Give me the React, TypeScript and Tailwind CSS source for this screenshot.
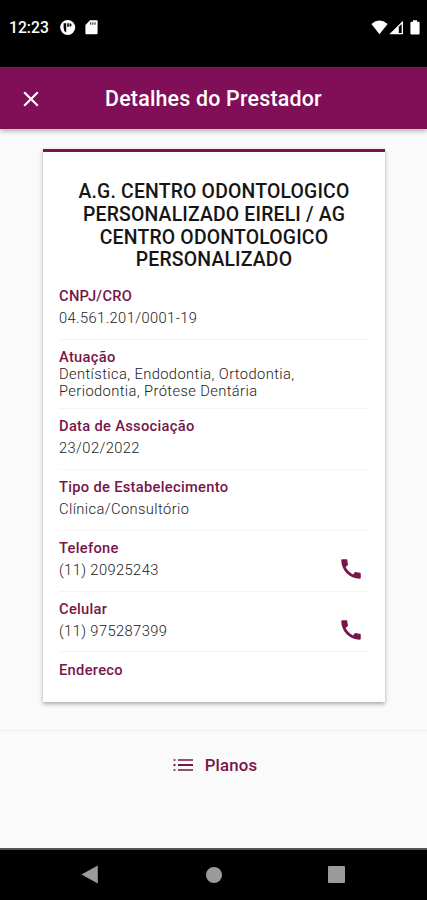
import { MdCall, MdClose } from "react-icons/md";

type Field = {
  label: string;
  value?: string;
  phone?: boolean;
  className: string;
  valueClassName?: string;
};

const fields: Field[] = [
  { label: "CNPJ/CRO", value: "04.561.201/0001-19", className: "h-[61px]" },
  {
    label: "Atuação",
    value: "Dentística, Endodontia, Ortodontia, Periodontia, Prótese Dentária",
    className: "h-[69.5px]",
    valueClassName: "w-[260px]",
  },
  { label: "Data de Associação", value: "23/02/2022", className: "h-[61px]" },
  {
    label: "Tipo de Estabelecimento",
    value: "Clínica/Consultório",
    className: "h-[60.5px]",
  },
  {
    label: "Telefone",
    value: "(11) 20925243",
    phone: true,
    className: "h-[61px]",
  },
  {
    label: "Celular",
    value: "(11) 975287399",
    phone: true,
    className: "h-[60.5px]",
  },
];

const StatusBar = () => (
  <div className="flex h-[67px] shrink-0 items-start justify-between bg-black pt-[18px] pr-[7px] pl-[9px] text-white">
    <div className="flex h-[19px] items-center">
      <span className="w-[51px] text-[15.7px] leading-[19px] font-medium">
        12:23
      </span>
      <svg width="16" height="16" viewBox="0 0 16 16">
        <circle cx="7.7" cy="7.5" r="7.5" fill="#fff" />
        <path
          d="M3.6 3.2h2.6v9.2Q3.6 11 3.6 8zM7.2 3.2h1.6v3.6H7.2zM9.6 3.2q2 0 2 1.8t-2 1.8z"
          fill="#000"
        />
      </svg>
      <svg className="ml-[9px]" width="13" height="16" viewBox="0 0 13 16">
        <path
          d="M5 .3h6.6q1 0 1 1v12q0 1-1 1H1.4q-1 0-1-1V5z"
          fill="#fff"
        />
        <path
          d="M5 2.3h1.3v2.4H5zM7.2 2.3h1.3v2.4H7.2zM9.4 2.3h1.3v2.4H9.4z"
          fill="#555"
        />
      </svg>
    </div>
    <div className="flex h-[19px] items-center">
      <svg width="17" height="15" viewBox="0 0 17 15">
        <path d="M.4 3.9Q8.5-2.9 16.6 3.9L8.5 14.3z" fill="#fff" />
      </svg>
      <svg className="ml-px" width="15" height="15" viewBox="0 0 15 15">
        <path d="M.3 14.3 14 .7v13.6z" fill="#fff" />
        <path d="M9.8 6.8 12.7 4v9H9.8z" fill="#000" />
      </svg>
      <svg className="ml-[6px]" width="10" height="15" viewBox="0 0 10 15">
        <path
          d="M3 .3h4v1.5h1.6q1 0 1 1v10.6q0 1-1 1H1.4q-1 0-1-1V2.8q0-1 1-1H3z"
          fill="#fff"
        />
      </svg>
    </div>
  </div>
);

const ListIcon = () => (
  <svg width="20" height="12" viewBox="0 0 20 12" fill="currentColor">
    <path d="M.5.3h2v1.5h-2zM.5 5h2v2h-2zM.5 10.2h2v1.5h-2z" />
    <path d="M5 .3h15v1.5H5zM5 5h15v2H5zM5 10.2h15v1.5H5z" />
  </svg>
);

const NavigationBar = () => (
  <div className="flex h-[52px] shrink-0 items-center justify-between border-t-2 border-[#555] bg-black pr-[82px] pl-[81px]">
    <svg width="18" height="20" viewBox="0 0 18 20">
      <path d="M.5 9.5 16.8.4v18.2z" fill="#9b9b9b" />
    </svg>
    <div className="size-4 rounded-full bg-[#9b9b9b]" />
    <div className="mb-px size-[17px] rounded-[1px] bg-[#9b9b9b]" />
  </div>
);

const App = () => {
  return (
    <div className="flex h-[900px] w-[427px] flex-col overflow-hidden bg-[#fafafa] font-[Roboto,sans-serif]">
      <StatusBar />

      <header className="z-10 flex h-[62px] shrink-0 items-center bg-[#800f57] pt-px text-white shadow-[0_2px_5px_rgba(0,0,0,0.3)]">
        <MdClose className="ml-[18px] size-[26px]" />
        <h1 className="ml-[61px] text-[21.4px] leading-6 font-medium tracking-[0.2px] whitespace-nowrap">
          Detalhes do Prestador
        </h1>
      </header>

      <main className="flex-1">
        <section className="mt-5 ml-[43px] h-[553px] w-[342px] border-t-3 border-[#76164a] bg-white px-4 shadow-[0_2px_4px_rgba(0,0,0,0.34)]">
          <h2 className="pt-[29px] text-center text-[19.4px] leading-[22.8px] font-medium tracking-[0.18px] text-[#151515]">
            A.G. CENTRO ODONTOLOGICO
            <br />
            PERSONALIZADO EIRELI / AG
            <br />
            CENTRO ODONTOLOGICO
            <br />
            PERSONALIZADO
          </h2>

          <div className="mt-[6.8px]">
            {fields.map((field) => (
              <div
                key={field.label}
                className={`flex justify-between border-b border-[#f4f4f4] pt-[9px] ${field.className}`}
              >
                <div>
                  <p className="text-[14.7px] leading-[17px] font-medium tracking-[0.3px] text-[#76164a]">
                    {field.label}
                  </p>
                  <p
                    className={`text-[14.7px] leading-[17.5px] font-light tracking-[0.4px] text-[#222] ${
                      field.valueClassName ?? "mt-[5px]"
                    }`}
                  >
                    {field.value}
                  </p>
                </div>
                {field.phone && (
                  <MdCall className="mt-[16px] mr-[5px] size-[26px] text-[#76164a]" />
                )}
              </div>
            ))}
            <p className="pt-[9.5px] text-[14.7px] leading-[17px] font-medium tracking-[0.3px] text-[#76164a]">
              Endereco
            </p>
          </div>
        </section>

        <div className="mt-7 flex items-center justify-center border-t border-[#ededed] pt-[22px] pl-[3px] text-[#76164a]">
          <ListIcon />
          <span className="ml-[12px] text-[16.8px] leading-6 font-medium tracking-[0.2px]">
            Planos
          </span>
        </div>
      </main>

      <NavigationBar />
    </div>
  );
};

export default App;
